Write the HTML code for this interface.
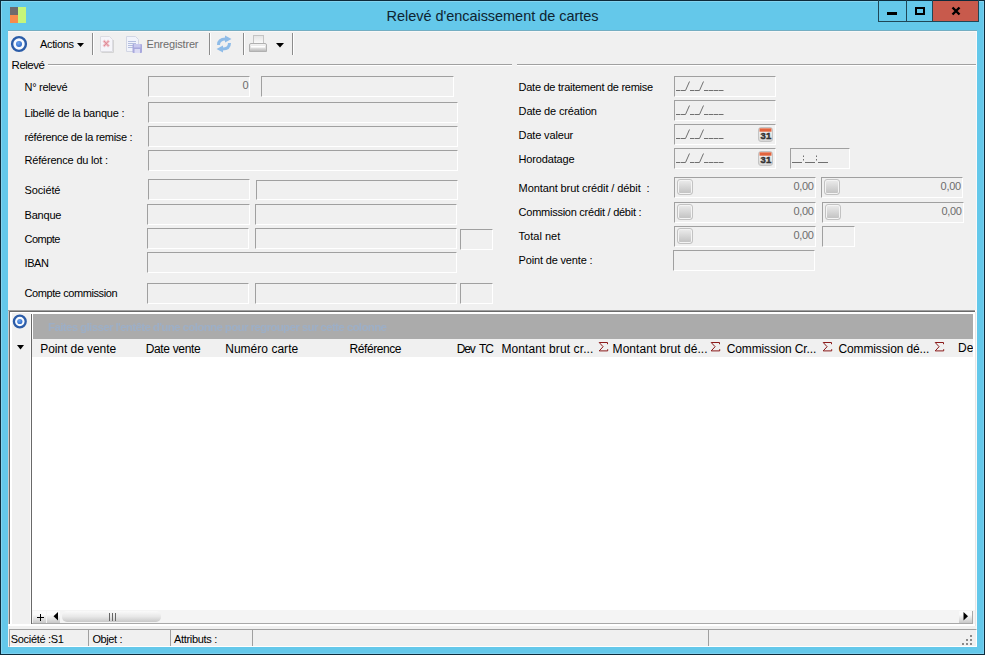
<!DOCTYPE html>
<html><head><meta charset="utf-8"><style>
html,body{margin:0;padding:0;width:985px;height:655px;overflow:hidden;background:#0d2b3b}
body>div,body>svg{position:absolute}
body{font-family:"Liberation Sans", sans-serif;position:relative}
</style></head><body>
<div style="left:0px;top:0px;width:985px;height:655px;background:#0d2b3b;"></div>
<div style="left:1px;top:1px;width:983px;height:653px;background:#64c8ea;"></div>
<div style="left:1px;top:1px;width:983px;height:1px;background:#86d4ef;"></div>
<div style="left:1px;top:1px;width:1px;height:653px;background:#86d4ef;"></div>
<div style="left:983px;top:1px;width:1px;height:653px;background:#7ccfee;"></div>
<div style="left:1px;top:653px;width:983px;height:1px;background:#7ccfee;"></div>
<div style="left:10px;top:7px;width:8px;height:8px;background:#6e6a6c;"></div>
<div style="left:10px;top:15px;width:8px;height:8px;background:#f68b4c;"></div>
<div style="left:18px;top:7px;width:8px;height:16px;background:#c5f57b;"></div>
<div style="left:878px;top:1px;width:100px;height:20px;background:#64c8ea;"></div>
<div style="left:932px;top:1px;width:46px;height:20px;background:#c85a4c;"></div>
<div style="left:878px;top:0px;width:1px;height:22px;background:#1f4656;"></div>
<div style="left:906px;top:0px;width:1px;height:22px;background:#1f4656;"></div>
<div style="left:932px;top:0px;width:1px;height:22px;background:#1f4656;"></div>
<div style="left:978px;top:0px;width:1px;height:22px;background:#1f4656;"></div>
<div style="left:878px;top:21px;width:101px;height:1px;background:#1f4656;"></div>
<div style="left:887px;top:12px;width:10px;height:3px;background:#000;"></div>
<div style="left:915px;top:7px;width:6px;height:4px;border:2px solid #000;border-top-width:2px"></div>
<svg style="left:951px;top:6px" width="10" height="10"><path d="M1.5 1.5L8.5 8.5M8.5 1.5L1.5 8.5" stroke="#000" stroke-width="2.4"/></svg>
<div style="left:8px;top:30px;width:969px;height:1px;background:#74aec2;"></div>
<div style="left:8px;top:31px;width:969px;height:616px;background:#f0f0f0;"></div>
<div style="left:8px;top:31px;width:969px;height:1px;background:#f8f8f8;"></div>
<svg style="left:10px;top:35px" width="18" height="18"><defs><radialGradient id="dg" cx="0.4" cy="0.35" r="0.7"><stop offset="0" stop-color="#6aa4ee"/><stop offset="1" stop-color="#2a64c4"/></radialGradient></defs><circle cx="9" cy="9" r="6.9" fill="#f6faff" stroke="#2b5ca8" stroke-width="2.4"/><circle cx="9" cy="9" r="3" fill="url(#dg)"/></svg>
<svg style="left:77px;top:43px" width="8" height="5"><path d="M0 0H7L3.5 4Z" fill="#000"/></svg>
<div style="left:92px;top:33px;width:1px;height:22px;background:#8c8c8c;"></div>
<div style="left:93px;top:33px;width:1px;height:22px;background:#ffffff;"></div>
<div style="left:209px;top:33px;width:1px;height:22px;background:#8c8c8c;"></div>
<div style="left:210px;top:33px;width:1px;height:22px;background:#ffffff;"></div>
<div style="left:243px;top:33px;width:1px;height:22px;background:#8c8c8c;"></div>
<div style="left:244px;top:33px;width:1px;height:22px;background:#ffffff;"></div>
<div style="left:292px;top:33px;width:1px;height:22px;background:#8c8c8c;"></div>
<div style="left:293px;top:33px;width:1px;height:22px;background:#ffffff;"></div>
<svg style="left:99px;top:35px" width="17" height="19"><path d="M2.5 17.5H14.5V5" fill="none" stroke="#d4d4d4"/><path d="M1.5 1.5H10.5L13.5 4.5V16.5H1.5Z" fill="#f5f5fa" stroke="#dcdce2"/><path d="M4.5 5.5L10 11.5M10 5.5L4.5 11.5" stroke="#f0c0c8" stroke-width="2.6"/><path d="M5 6L9.5 11M9.5 6L5 11" stroke="#d87888" stroke-width="0.8"/></svg>
<svg style="left:125px;top:35px" width="18" height="19"><path d="M1.5 1.5H10.5L13.5 4.5V16.5H1.5Z" fill="#f1f3fb" stroke="#d2d6e4"/><g stroke="#b4bede" stroke-width="1"><path d="M3 6.5H11M3 8.5H11M3 10.5H9M3 12.5H9"/></g><rect x="7.5" y="9" width="9.5" height="9" rx="1" fill="#a9a9dd"/><rect x="9" y="9" width="6.5" height="3.5" fill="#c8c8ee"/><rect x="9.5" y="14" width="5.5" height="4" fill="#dcdcf4"/></svg>
<svg style="left:215px;top:35px" width="18" height="18"><g fill="none" stroke="#8fbce8" stroke-width="3"><path d="M3.5 10Q3.5 4 10.5 4"/><path d="M14.5 8Q14.5 14 7.5 14"/></g><path d="M10 0.5L16.5 4L10 7.5Z" fill="#8fbce8"/><path d="M8 10.5L1.5 14L8 17.5Z" fill="#8fbce8"/></svg>
<svg style="left:248px;top:34px" width="20" height="19"><defs><linearGradient id="pp" x1="0" y1="0" x2="0" y2="1"><stop offset="0" stop-color="#e4e4e4"/><stop offset="1" stop-color="#fafafa"/></linearGradient><linearGradient id="pb" x1="0" y1="0" x2="0" y2="1"><stop offset="0" stop-color="#f6f6f6"/><stop offset="0.6" stop-color="#dcdcdc"/><stop offset="1" stop-color="#b4b4b4"/></linearGradient></defs><rect x="5.5" y="1.5" width="10" height="8" fill="url(#pp)" stroke="#c4c4c4"/><path d="M1.5 11Q1.5 9.5 3 9.5H17Q18.5 9.5 18.5 11V17.5H1.5Z" fill="url(#pb)" stroke="#b0b0b0"/><rect x="3" y="12" width="14" height="1.5" fill="#ffffff"/></svg>
<svg style="left:276px;top:43px" width="9" height="5"><path d="M0 0H8L4 4.5Z" fill="#000"/></svg>
<div style="left:48px;top:64px;width:464px;height:1px;background:#a0a0a0;"></div>
<div style="left:48px;top:65px;width:464px;height:1px;background:#ffffff;"></div>
<div style="left:517px;top:64px;width:460px;height:1px;background:#a0a0a0;"></div>
<div style="left:517px;top:65px;width:460px;height:1px;background:#ffffff;"></div>
<div style="left:148px;top:76px;width:100px;height:19px;background:#f0f0f0;border:1px solid;border-color:#a0a0a0 #ffffff #ffffff #a0a0a0"></div>
<div style="left:261px;top:76px;width:191px;height:19px;background:#f0f0f0;border:1px solid;border-color:#a0a0a0 #ffffff #ffffff #a0a0a0"></div>
<div style="left:148px;top:102px;width:308px;height:19px;background:#f0f0f0;border:1px solid;border-color:#a0a0a0 #ffffff #ffffff #a0a0a0"></div>
<div style="left:148px;top:126px;width:308px;height:19px;background:#f0f0f0;border:1px solid;border-color:#a0a0a0 #ffffff #ffffff #a0a0a0"></div>
<div style="left:148px;top:150px;width:308px;height:19px;background:#f0f0f0;border:1px solid;border-color:#a0a0a0 #ffffff #ffffff #a0a0a0"></div>
<div style="left:148px;top:179px;width:100px;height:19px;background:#f0f0f0;border:1px solid;border-color:#a0a0a0 #ffffff #ffffff #a0a0a0"></div>
<div style="left:256px;top:180px;width:200px;height:18px;background:#f0f0f0;border:1px solid;border-color:#a0a0a0 #ffffff #ffffff #a0a0a0"></div>
<div style="left:147px;top:204px;width:101px;height:19px;background:#f0f0f0;border:1px solid;border-color:#a0a0a0 #ffffff #ffffff #a0a0a0"></div>
<div style="left:255px;top:204px;width:200px;height:19px;background:#f0f0f0;border:1px solid;border-color:#a0a0a0 #ffffff #ffffff #a0a0a0"></div>
<div style="left:147px;top:228px;width:100px;height:19px;background:#f0f0f0;border:1px solid;border-color:#a0a0a0 #ffffff #ffffff #a0a0a0"></div>
<div style="left:255px;top:228px;width:200px;height:19px;background:#f0f0f0;border:1px solid;border-color:#a0a0a0 #ffffff #ffffff #a0a0a0"></div>
<div style="left:460px;top:229px;width:31px;height:19px;background:#f0f0f0;border:1px solid;border-color:#a0a0a0 #ffffff #ffffff #a0a0a0"></div>
<div style="left:147px;top:252px;width:308px;height:19px;background:#f0f0f0;border:1px solid;border-color:#a0a0a0 #ffffff #ffffff #a0a0a0"></div>
<div style="left:147px;top:283px;width:100px;height:19px;background:#f0f0f0;border:1px solid;border-color:#a0a0a0 #ffffff #ffffff #a0a0a0"></div>
<div style="left:255px;top:283px;width:200px;height:19px;background:#f0f0f0;border:1px solid;border-color:#a0a0a0 #ffffff #ffffff #a0a0a0"></div>
<div style="left:460px;top:283px;width:31px;height:19px;background:#f0f0f0;border:1px solid;border-color:#a0a0a0 #ffffff #ffffff #a0a0a0"></div>
<div style="left:674px;top:76px;width:100px;height:19px;background:#f0f0f0;border:1px solid;border-color:#a0a0a0 #ffffff #ffffff #a0a0a0"></div>
<svg style="left:674px;top:76px" width="60" height="20"><g stroke="#707070" stroke-width="1" fill="none"><path d="M2 14.5H11.5M16 14.5H25.5M30 14.5H50" stroke-dasharray="4.5 0.5"/><path d="M11.5 14.5L15.5 5.5M25.5 14.5L29.5 5.5"/></g></svg>
<div style="left:674px;top:100px;width:100px;height:19px;background:#f0f0f0;border:1px solid;border-color:#a0a0a0 #ffffff #ffffff #a0a0a0"></div>
<svg style="left:674px;top:100px" width="60" height="20"><g stroke="#707070" stroke-width="1" fill="none"><path d="M2 14.5H11.5M16 14.5H25.5M30 14.5H50" stroke-dasharray="4.5 0.5"/><path d="M11.5 14.5L15.5 5.5M25.5 14.5L29.5 5.5"/></g></svg>
<div style="left:674px;top:124px;width:100px;height:19px;background:#f0f0f0;border:1px solid;border-color:#a0a0a0 #ffffff #ffffff #a0a0a0"></div>
<svg style="left:674px;top:124px" width="60" height="20"><g stroke="#707070" stroke-width="1" fill="none"><path d="M2 14.5H11.5M16 14.5H25.5M30 14.5H50" stroke-dasharray="4.5 0.5"/><path d="M11.5 14.5L15.5 5.5M25.5 14.5L29.5 5.5"/></g></svg>
<div style="left:674px;top:148px;width:100px;height:19px;background:#f0f0f0;border:1px solid;border-color:#a0a0a0 #ffffff #ffffff #a0a0a0"></div>
<svg style="left:674px;top:148px" width="60" height="20"><g stroke="#707070" stroke-width="1" fill="none"><path d="M2 14.5H11.5M16 14.5H25.5M30 14.5H50" stroke-dasharray="4.5 0.5"/><path d="M11.5 14.5L15.5 5.5M25.5 14.5L29.5 5.5"/></g></svg>
<svg style="left:758px;top:127px" width="16" height="16"><defs><linearGradient id="cg" x1="0" y1="0" x2="0" y2="1"><stop offset="0" stop-color="#f6f6f6"/><stop offset="1" stop-color="#d6d6d6"/></linearGradient></defs><rect x="0.5" y="0.5" width="14" height="14" rx="2.5" fill="url(#cg)" stroke="#c4c4c4"/><rect x="1.5" y="1.3" width="12" height="3.4" fill="#e2643e"/><text x="2.6" y="12.4" font-family="Liberation Sans" font-weight="bold" font-size="9.5" letter-spacing="0.1" fill="#333" stroke="#333" stroke-width="0.45">31</text></svg>
<svg style="left:758px;top:151px" width="16" height="16"><defs><linearGradient id="cg" x1="0" y1="0" x2="0" y2="1"><stop offset="0" stop-color="#f6f6f6"/><stop offset="1" stop-color="#d6d6d6"/></linearGradient></defs><rect x="0.5" y="0.5" width="14" height="14" rx="2.5" fill="url(#cg)" stroke="#c4c4c4"/><rect x="1.5" y="1.3" width="12" height="3.4" fill="#e2643e"/><text x="2.6" y="12.4" font-family="Liberation Sans" font-weight="bold" font-size="9.5" letter-spacing="0.1" fill="#333" stroke="#333" stroke-width="0.45">31</text></svg>
<div style="left:790px;top:148px;width:58px;height:19px;background:#f0f0f0;border:1px solid;border-color:#a0a0a0 #ffffff #ffffff #a0a0a0"></div>
<svg style="left:790px;top:148px" width="50" height="20"><g fill="#707070"><rect x="2" y="14" width="10" height="1"/><rect x="15" y="14" width="10" height="1"/><rect x="28" y="14" width="10" height="1"/><rect x="13" y="7.5" width="1" height="1.5"/><rect x="13" y="11" width="1" height="1.5"/><rect x="26" y="7.5" width="1" height="1.5"/><rect x="26" y="11" width="1" height="1.5"/></g></svg>
<div style="left:674px;top:177px;width:140px;height:19px;background:#f0f0f0;border:1px solid;border-color:#a0a0a0 #ffffff #ffffff #a0a0a0"></div>
<div style="left:677px;top:179px;width:14px;height:14px;border:1px solid #c2c2c2;border-radius:3px;box-sizing:border-box;width:16px;height:16px;box-shadow:inset 0 0 0 1px #f4f4f4;background:linear-gradient(#ececec,#c0c0c0)"></div>
<div style="left:821px;top:177px;width:140px;height:19px;background:#f0f0f0;border:1px solid;border-color:#a0a0a0 #ffffff #ffffff #a0a0a0"></div>
<div style="left:824px;top:179px;width:14px;height:14px;border:1px solid #c2c2c2;border-radius:3px;box-sizing:border-box;width:16px;height:16px;box-shadow:inset 0 0 0 1px #f4f4f4;background:linear-gradient(#ececec,#c0c0c0)"></div>
<div style="left:674px;top:202px;width:140px;height:19px;background:#f0f0f0;border:1px solid;border-color:#a0a0a0 #ffffff #ffffff #a0a0a0"></div>
<div style="left:677px;top:204px;width:14px;height:14px;border:1px solid #c2c2c2;border-radius:3px;box-sizing:border-box;width:16px;height:16px;box-shadow:inset 0 0 0 1px #f4f4f4;background:linear-gradient(#ececec,#c0c0c0)"></div>
<div style="left:822px;top:202px;width:140px;height:19px;background:#f0f0f0;border:1px solid;border-color:#a0a0a0 #ffffff #ffffff #a0a0a0"></div>
<div style="left:825px;top:204px;width:14px;height:14px;border:1px solid #c2c2c2;border-radius:3px;box-sizing:border-box;width:16px;height:16px;box-shadow:inset 0 0 0 1px #f4f4f4;background:linear-gradient(#ececec,#c0c0c0)"></div>
<div style="left:674px;top:226px;width:140px;height:19px;background:#f0f0f0;border:1px solid;border-color:#a0a0a0 #ffffff #ffffff #a0a0a0"></div>
<div style="left:677px;top:228px;width:14px;height:14px;border:1px solid #c2c2c2;border-radius:3px;box-sizing:border-box;width:16px;height:16px;box-shadow:inset 0 0 0 1px #f4f4f4;background:linear-gradient(#ececec,#c0c0c0)"></div>
<div style="left:822px;top:226px;width:31px;height:19px;background:#f0f0f0;border:1px solid;border-color:#a0a0a0 #ffffff #ffffff #a0a0a0"></div>
<div style="left:673px;top:250px;width:140px;height:19px;background:#f0f0f0;border:1px solid;border-color:#a0a0a0 #ffffff #ffffff #a0a0a0"></div>
<div style="left:8px;top:310px;width:968px;height:316px;background:#ffffff;"></div>
<div style="left:8px;top:310px;width:967px;height:1px;background:#a0a0a0;"></div>
<div style="left:8px;top:311px;width:967px;height:1px;background:#696969;"></div>
<div style="left:975px;top:312px;width:1px;height:314px;background:#e6e6e6;"></div>
<div style="left:976px;top:31px;width:1px;height:616px;background:#fafafa;"></div>
<div style="left:8px;top:311px;width:1px;height:313px;background:#c8c8c8;"></div>
<div style="left:9px;top:311px;width:1px;height:313px;background:#696969;"></div>
<div style="left:12px;top:313px;width:18px;height:311px;background:#f0f0f0;"></div>
<div style="left:30px;top:313px;width:1px;height:311px;background:#fafafa;"></div>
<div style="left:31px;top:314px;width:1px;height:310px;background:#696969;"></div>
<svg style="left:12px;top:314px" width="16" height="16"><circle cx="7.8" cy="7.5" r="5.9" fill="#f6faff" stroke="#2b5ca8" stroke-width="2.3"/><circle cx="7.8" cy="7.5" r="2.6" fill="url(#dg)"/></svg>
<svg style="left:17px;top:345px" width="8" height="5"><path d="M0 0H7L3.5 4.5Z" fill="#000"/></svg>
<div style="left:33px;top:314px;width:940px;height:25px;background:#ababab;"></div>
<div style="left:32px;top:339px;width:941px;height:18px;background:#f0f0f0;"></div>
<svg style="left:598px;top:341px" width="12" height="12"><path d="M9.5 3.2V1.5H1.2L5.1 5.7L1.2 9.9H9.7V8.2" fill="none" stroke="#8b1a1a" stroke-width="1"/></svg>
<svg style="left:710px;top:341px" width="12" height="12"><path d="M9.5 3.2V1.5H1.2L5.1 5.7L1.2 9.9H9.7V8.2" fill="none" stroke="#8b1a1a" stroke-width="1"/></svg>
<svg style="left:822px;top:341px" width="12" height="12"><path d="M9.5 3.2V1.5H1.2L5.1 5.7L1.2 9.9H9.7V8.2" fill="none" stroke="#8b1a1a" stroke-width="1"/></svg>
<svg style="left:934px;top:341px" width="12" height="12"><path d="M9.5 3.2V1.5H1.2L5.1 5.7L1.2 9.9H9.7V8.2" fill="none" stroke="#8b1a1a" stroke-width="1"/></svg>
<div style="left:958px;top:339px;width:15px;height:18px;overflow:hidden"><span style="position:absolute;left:0;top:2px;font:12px &quot;Liberation Sans&quot;, sans-serif">De</span></div>
<div style="left:32px;top:610px;width:943px;height:14px;background:#f4f4f4;"></div>
<div style="left:32px;top:623px;width:941px;height:1px;background:#a8a8a8;"></div>
<div style="left:33px;top:611px;width:13px;height:12px;background:linear-gradient(#fafafa 30%,#c8c8c8)"></div>
<svg style="left:37px;top:614px" width="7" height="7"><path d="M3 0V7M0 3H7" stroke="#000" stroke-width="1" shape-rendering="crispEdges"/></svg>
<div style="left:47px;top:611px;width:13px;height:12px;background:linear-gradient(#fafafa 30%,#c8c8c8)"></div>
<svg style="left:53px;top:612px" width="6" height="9"><path d="M5 0V8.5L0.5 4.25Z" fill="#000"/></svg>
<div style="left:62px;top:611px;width:99px;height:11px;border-radius:5px;background:linear-gradient(#fafafa,#e8e8e8 50%,#c8c8c8)"></div>
<div style="left:109px;top:613px;width:1px;height:8px;background:#666666;"></div>
<div style="left:112px;top:613px;width:1px;height:8px;background:#666666;"></div>
<div style="left:115px;top:613px;width:1px;height:8px;background:#666666;"></div>
<div style="left:959px;top:611px;width:13px;height:12px;background:linear-gradient(#fafafa 30%,#c8c8c8);border-right:1px solid #a8a8a8"></div>
<svg style="left:963px;top:612px" width="6" height="9"><path d="M0.5 0V8.5L5 4.25Z" fill="#000"/></svg>
<div style="left:9px;top:629px;width:966px;height:16px;background:#f0f0f0;border:1px solid;border-color:#a0a0a0 #ffffff #ffffff #a0a0a0"></div>
<div style="left:88px;top:630px;width:1px;height:16px;background:#a0a0a0;"></div>
<div style="left:170px;top:630px;width:1px;height:16px;background:#a0a0a0;"></div>
<div style="left:252px;top:630px;width:1px;height:16px;background:#a0a0a0;"></div>
<div style="left:708px;top:630px;width:1px;height:16px;background:#a0a0a0;"></div>
<div style="left:970px;top:635px;width:2px;height:2px;background:#8a8a8a;"></div>
<div style="left:966px;top:639px;width:2px;height:2px;background:#8a8a8a;"></div>
<div style="left:970px;top:639px;width:2px;height:2px;background:#8a8a8a;"></div>
<div style="left:962px;top:643px;width:2px;height:2px;background:#8a8a8a;"></div>
<div style="left:966px;top:643px;width:2px;height:2px;background:#8a8a8a;"></div>
<div style="left:970px;top:643px;width:2px;height:2px;background:#8a8a8a;"></div>
<div style="left:386.50px;top:7.71px;font-size:14.5px;line-height:17px;color:#0e2431;font-weight:normal;letter-spacing:-0.038px;white-space:pre;">Relevé d'encaissement de cartes</div>
<div style="left:40.00px;top:37.86px;font-size:11px;line-height:13px;color:#000;font-weight:normal;letter-spacing:-0.346px;white-space:pre;">Actions</div>
<div style="left:146.50px;top:37.86px;font-size:11px;line-height:13px;color:#6d6d6d;font-weight:normal;letter-spacing:-0.180px;white-space:pre;">Enregistrer</div>
<div style="left:11.60px;top:58.40px;font-size:11.5px;line-height:14px;color:#000;font-weight:normal;letter-spacing:-0.522px;white-space:pre;">Relevé</div>
<div style="left:24.50px;top:80.86px;font-size:11px;line-height:13px;color:#000;font-weight:normal;letter-spacing:-0.295px;white-space:pre;">N° relevé</div>
<div style="left:24.50px;top:106.86px;font-size:11px;line-height:13px;color:#000;font-weight:normal;letter-spacing:-0.219px;white-space:pre;">Libellé de la banque :</div>
<div style="left:24.50px;top:130.86px;font-size:11px;line-height:13px;color:#000;font-weight:normal;letter-spacing:-0.329px;white-space:pre;">référence de la remise :</div>
<div style="left:24.50px;top:154.36px;font-size:11px;line-height:13px;color:#000;font-weight:normal;letter-spacing:-0.191px;white-space:pre;">Référence du lot :</div>
<div style="left:24.50px;top:183.86px;font-size:11px;line-height:13px;color:#000;font-weight:normal;letter-spacing:-0.117px;white-space:pre;">Société</div>
<div style="left:24.50px;top:208.86px;font-size:11px;line-height:13px;color:#000;font-weight:normal;letter-spacing:-0.188px;white-space:pre;">Banque</div>
<div style="left:24.50px;top:232.86px;font-size:11px;line-height:13px;color:#000;font-weight:normal;letter-spacing:-0.506px;white-space:pre;">Compte</div>
<div style="left:24.50px;top:256.86px;font-size:11px;line-height:13px;color:#000;font-weight:normal;letter-spacing:-0.429px;white-space:pre;">IBAN</div>
<div style="left:24.50px;top:287.36px;font-size:11px;line-height:13px;color:#000;font-weight:normal;letter-spacing:-0.415px;white-space:pre;">Compte commission</div>
<div style="left:242.50px;top:78.86px;font-size:11px;line-height:13px;color:#6d6d6d;font-weight:normal;letter-spacing:-0.825px;white-space:pre;">0</div>
<div style="left:518.60px;top:80.86px;font-size:11px;line-height:13px;color:#000;font-weight:normal;letter-spacing:-0.273px;white-space:pre;">Date de traitement de remise</div>
<div style="left:518.60px;top:104.86px;font-size:11px;line-height:13px;color:#000;font-weight:normal;letter-spacing:-0.155px;white-space:pre;">Date de création</div>
<div style="left:518.60px;top:128.86px;font-size:11px;line-height:13px;color:#000;font-weight:normal;letter-spacing:-0.157px;white-space:pre;">Date valeur</div>
<div style="left:518.60px;top:152.86px;font-size:11px;line-height:13px;color:#000;font-weight:normal;letter-spacing:-0.167px;white-space:pre;">Horodatage</div>
<div style="left:518.60px;top:181.86px;font-size:11px;line-height:13px;color:#000;font-weight:normal;letter-spacing:-0.100px;white-space:pre;">Montant brut crédit / débit  :</div>
<div style="left:518.60px;top:206.36px;font-size:11px;line-height:13px;color:#000;font-weight:normal;letter-spacing:-0.254px;white-space:pre;">Commission crédit / débit :</div>
<div style="left:518.60px;top:230.36px;font-size:11px;line-height:13px;color:#000;font-weight:normal;letter-spacing:0.001px;white-space:pre;">Total net</div>
<div style="left:518.60px;top:254.36px;font-size:11px;line-height:13px;color:#000;font-weight:normal;letter-spacing:-0.164px;white-space:pre;">Point de vente :</div>
<div style="left:793.40px;top:179.86px;font-size:11px;line-height:13px;color:#6d6d6d;font-weight:normal;letter-spacing:-0.274px;white-space:pre;">0,00</div>
<div style="left:940.60px;top:179.86px;font-size:11px;line-height:13px;color:#6d6d6d;font-weight:normal;letter-spacing:-0.274px;white-space:pre;">0,00</div>
<div style="left:793.40px;top:204.86px;font-size:11px;line-height:13px;color:#6d6d6d;font-weight:normal;letter-spacing:-0.274px;white-space:pre;">0,00</div>
<div style="left:941.40px;top:204.86px;font-size:11px;line-height:13px;color:#6d6d6d;font-weight:normal;letter-spacing:-0.274px;white-space:pre;">0,00</div>
<div style="left:793.40px;top:228.86px;font-size:11px;line-height:13px;color:#6d6d6d;font-weight:normal;letter-spacing:-0.274px;white-space:pre;">0,00</div>
<div style="left:48.00px;top:320.20px;font-size:11.5px;line-height:14px;color:#98b0d0;font-weight:bold;letter-spacing:-0.621px;white-space:pre;filter:blur(0.7px);opacity:0.75">Faites glisser l'entête d'une colonne pour regrouper sur cette colonne</div>
<div style="left:40.20px;top:342.03px;font-size:12px;line-height:14px;color:#000;font-weight:normal;letter-spacing:-0.056px;white-space:pre;">Point de vente</div>
<div style="left:145.70px;top:342.03px;font-size:12px;line-height:14px;color:#000;font-weight:normal;letter-spacing:-0.339px;white-space:pre;">Date vente</div>
<div style="left:225.20px;top:342.03px;font-size:12px;line-height:14px;color:#000;font-weight:normal;letter-spacing:0.027px;white-space:pre;">Numéro carte</div>
<div style="left:349.50px;top:342.03px;font-size:12px;line-height:14px;color:#000;font-weight:normal;letter-spacing:-0.422px;white-space:pre;">Référence</div>
<div style="left:456.70px;top:342.03px;font-size:12px;line-height:14px;color:#000;font-weight:normal;letter-spacing:-1.172px;white-space:pre;">Dev</div>
<div style="left:478.90px;top:342.03px;font-size:12px;line-height:14px;color:#000;font-weight:normal;letter-spacing:-1.000px;white-space:pre;">TC</div>
<div style="left:501.40px;top:342.03px;font-size:12px;line-height:14px;color:#000;font-weight:normal;letter-spacing:0.115px;white-space:pre;">Montant brut cr...</div>
<div style="left:612.60px;top:342.03px;font-size:12px;line-height:14px;color:#000;font-weight:normal;letter-spacing:0.055px;white-space:pre;">Montant brut dé...</div>
<div style="left:726.70px;top:342.03px;font-size:12px;line-height:14px;color:#000;font-weight:normal;letter-spacing:-0.117px;white-space:pre;">Commission Cr...</div>
<div style="left:838.40px;top:342.03px;font-size:12px;line-height:14px;color:#000;font-weight:normal;letter-spacing:-0.114px;white-space:pre;">Commission dé...</div>
<div style="left:10.70px;top:632.86px;font-size:11px;line-height:13px;color:#000;font-weight:normal;letter-spacing:-0.297px;white-space:pre;">Société :S1</div>
<div style="left:92.40px;top:632.86px;font-size:11px;line-height:13px;color:#000;font-weight:normal;letter-spacing:-0.384px;white-space:pre;">Objet :</div>
<div style="left:174.00px;top:632.86px;font-size:11px;line-height:13px;color:#000;font-weight:normal;letter-spacing:-0.317px;white-space:pre;">Attributs :</div>
</body></html>
